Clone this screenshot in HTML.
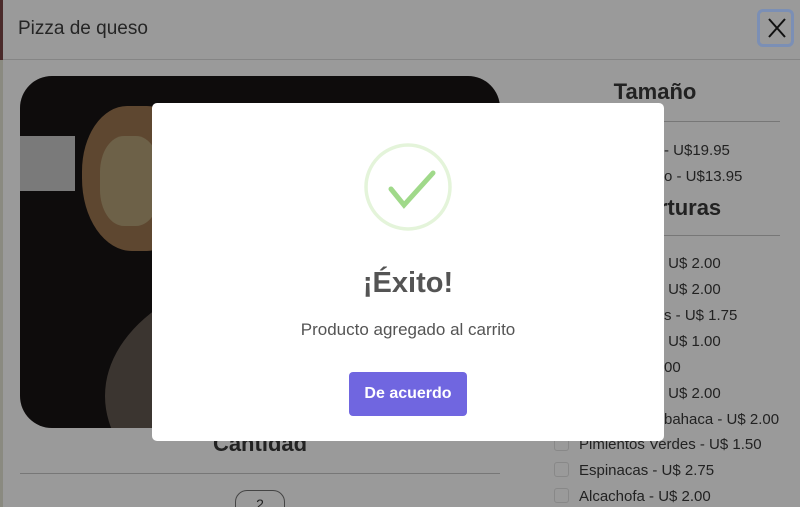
<!DOCTYPE html>
<html><head><meta charset="utf-8"><style>
*{box-sizing:border-box;margin:0;padding:0}
html,body{width:800px;height:507px;overflow:hidden}
body{background:#9a9a9a;font-family:"Liberation Sans",sans-serif;position:relative;color:#222}
.a{position:absolute}
.r div{height:26px}
</style></head><body>
<div class="a" style="left:0;top:0;width:3px;height:60px;background:#4a2a2a"></div>
<div class="a" style="left:0;top:60px;width:3px;height:447px;background:#8a8a80"></div>
<div class="a" style="left:18px;top:18px;font-size:19px;color:#252525">Pizza de queso</div>
<div class="a" style="left:757px;top:9px;width:37px;height:38px;border:3px solid #7b8fb5;border-radius:6px;"></div>
<svg class="a" style="left:766px;top:17px" width="22" height="22"><path d="M3 2L19 20M19 2L3 20" stroke="#111" stroke-width="2"/></svg>
<div class="a" style="left:3px;top:59px;width:797px;height:1px;background:#858585"></div>
<div class="a" style="left:20px;top:76px;width:480px;height:352px;background:#0e0c0c;border-radius:32px;overflow:hidden">
  <div class="a" style="left:62px;top:30px;width:100px;height:145px;border-radius:45% 35% 35% 50%;background:#5e4730"></div>
  <div class="a" style="left:80px;top:60px;width:60px;height:90px;border-radius:40%;background:#6d6148"></div>
  <div class="a" style="left:0;top:60px;width:55px;height:55px;background:#7a7a7a"></div>
  <div class="a" style="left:85px;top:190px;width:400px;height:260px;border-radius:50%;background:#3b3530"></div>
</div>
<div class="a" style="left:0;top:431px;width:520px;text-align:center;font-size:22px;font-weight:bold;color:#222">Cantidad</div>
<div class="a" style="left:20px;top:473px;width:480px;height:1px;background:#777"></div>
<div class="a" style="left:235px;top:490px;width:50px;height:30px;border:1px solid #444;border-radius:12px;text-align:center;font-size:14px;padding-top:5px">2</div>
<div class="a" style="left:555px;top:79px;width:200px;text-align:center;font-size:22px;font-weight:bold">Tamaño</div>
<div class="a" style="left:555px;top:121px;width:225px;height:1px;background:#777"></div>
<div class="a" style="left:555px;top:195px;width:215px;text-align:center;font-size:22px;font-weight:bold">Coberturas</div>
<div class="a" style="left:555px;top:235px;width:225px;height:1px;background:#777"></div>
<div class="a r" style="left:554px;top:432px;font-size:15px;line-height:26px;color:#222">
<div><span style="display:inline-block;width:15px;height:15px;border:1px solid #888;border-radius:3px;vertical-align:-2px;margin-right:10px"></span>Pimientos Verdes - U$ 1.50</div>
<div><span style="display:inline-block;width:15px;height:15px;border:1px solid #888;border-radius:3px;vertical-align:-2px;margin-right:10px"></span>Espinacas - U$ 2.75</div>
<div><span style="display:inline-block;width:15px;height:15px;border:1px solid #888;border-radius:3px;vertical-align:-2px;margin-right:10px"></span>Alcachofa - U$ 2.00</div>
</div>
<div class="a r" style="left:664px;top:138px;font-size:15px;line-height:26px">
<div>- U$19.95</div><div>o - U$13.95</div></div>
<div class="a r" style="left:664px;top:251px;font-size:15px;line-height:26px">
<div>&nbsp;U$ 2.00</div>
<div>&nbsp;U$ 2.00</div>
<div>s - U$ 1.75</div>
<div>&nbsp;U$ 1.00</div>
<div>00</div>
<div>&nbsp;U$ 2.00</div>
<div>bahaca - U$ 2.00</div>
</div>
<div class="a" style="left:152px;top:103px;width:512px;height:338px;background:#fff;border-radius:5px">
  <svg class="a" style="left:212px;top:40px" width="88" height="88"><circle cx="44" cy="44" r="42" fill="none" stroke="#e4f4da" stroke-width="3.5"/><path d="M27 46L40 62L69 30" fill="none" stroke="#a0d98a" stroke-width="5" stroke-linecap="round"/></svg>
  <div class="a" style="left:0;top:164px;width:512px;text-align:center;font-size:29px;font-weight:bold;color:#545454">¡Éxito!</div>
  <div class="a" style="left:0;top:217px;width:512px;text-align:center;font-size:17px;color:#545454">Producto agregado al carrito</div>
  <div class="a" style="left:197px;top:269px;width:118px;height:44px;background:#7066e0;border-radius:4px;color:#fff;font-weight:bold;font-size:16px;text-align:center;line-height:44px">De acuerdo</div>
</div>
</body></html>
